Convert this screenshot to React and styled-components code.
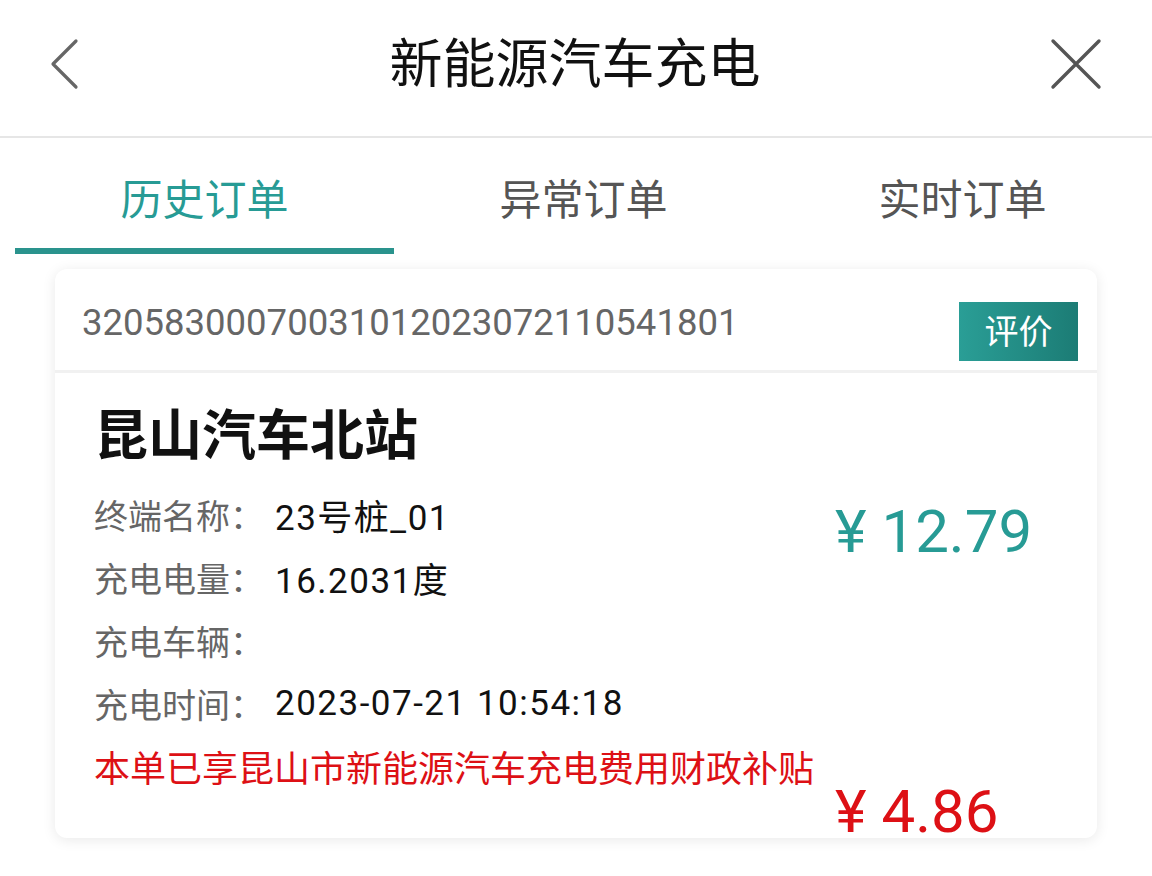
import React, { useState } from "react";
import styled, { createGlobalStyle } from "styled-components";

const GlobalStyle = createGlobalStyle`
    html, body {
        margin: 0;
        padding: 0;
        background: #ffffff;
        font-family: "Noto Sans CJK SC", "Noto Sans", sans-serif;
    }
`;

const TABS = ["历史订单", "异常订单", "实时订单"];

const DETAILS = [
    { label: "终端名称：", value: "23号桩_01" },
    { label: "充电电量：", value: "16.2031度" },
    { label: "充电车辆：", value: "" },
    { label: "充电时间：", value: "2023-07-21 10:54:18" },
];

const BackIcon = () => (
    <svg width="40" height="52" viewBox="0 0 40 52" fill="none">
        <path d="M28 3 L5 26 L28 49" stroke="#666" strokeWidth="3.2" strokeLinecap="round" strokeLinejoin="round" />
    </svg>
);

const CloseIcon = () => (
    <svg width="52" height="52" viewBox="0 0 52 52" fill="none">
        <path d="M3 3 L49 49 M49 3 L3 49" stroke="#555" strokeWidth="3.4" strokeLinecap="round" />
    </svg>
);

const App = () => {
    const [activeTab, setActiveTab] = useState(0);

    return (
        <>
            <GlobalStyle />
            <Page>
                <Navbar>
                    <NavButton>
                        <BackIcon />
                    </NavButton>
                    <NavTitle>新能源汽车充电</NavTitle>
                    <NavButton $right>
                        <CloseIcon />
                    </NavButton>
                </Navbar>

                <TabBar>
                    {TABS.map((tab, i) => (
                        <Tab key={tab} $active={activeTab === i} onClick={() => setActiveTab(i)}>
                            {tab}
                        </Tab>
                    ))}
                </TabBar>

                <OrderCard>
                    <OrderHeader>
                        <OrderNumber>32058300070031012023072110541801</OrderNumber>
                        <RateButton>评价</RateButton>
                    </OrderHeader>

                    <OrderBody>
                        <StationName>昆山汽车北站</StationName>
                        <DetailGrid>
                            <DetailList>
                                {DETAILS.map((item) => (
                                    <DetailRow key={item.label}>
                                        <DetailLabel>{item.label}</DetailLabel>
                                        <DetailValue>{item.value}</DetailValue>
                                    </DetailRow>
                                ))}
                            </DetailList>
                            <Amount $color="#279b95" $offset="21px">¥ 12.79</Amount>
                            <SubsidyNote>本单已享昆山市新能源汽车充电费用财政补贴</SubsidyNote>
                            <Amount $color="#dd1015" $offset="-14px">¥ 4.86</Amount>
                        </DetailGrid>
                    </OrderBody>
                </OrderCard>
            </Page>
        </>
    );
};

export default App;

const Page = styled.div`
    width: 1152px;
    min-height: 876px;
    background: #ffffff;
`;

const Navbar = styled.div`
    height: 136px;
    display: flex;
    align-items: center;
    justify-content: space-between;
    padding: 0 50px 0 48px;
    border-bottom: 2px solid #e6e6e6;
    box-sizing: content-box;
`;

const NavButton = styled.div`
    width: 56px;
    height: 56px;
    display: flex;
    align-items: center;
    justify-content: ${(props) => (props.$right ? "flex-end" : "flex-start")};
    margin-top: -8px;
`;

const NavTitle = styled.div`
    font-size: 53px;
    color: #111;
    margin-top: -16px;
`;

const TabBar = styled.div`
    display: grid;
    grid-template-columns: repeat(3, 1fr);
    padding-left: 15px;
    height: 116px;
`;

const Tab = styled.div`
    display: flex;
    align-items: center;
    justify-content: center;
    font-size: 42px;
    color: ${(props) => (props.$active ? "#279b95" : "#555")};
    border-bottom: 6px solid ${(props) => (props.$active ? "#2a938d" : "transparent")};
    padding-top: 6px;
    cursor: pointer;
`;

const OrderCard = styled.div`
    margin: 15px 55px 0;
    height: 569px;
    background: #fff;
    border-radius: 12px;
    box-shadow: 0 2px 14px rgba(0, 0, 0, 0.09);
`;

const OrderHeader = styled.div`
    height: 101px;
    display: flex;
    align-items: flex-start;
    justify-content: space-between;
    padding: 0 19px 0 27px;
    border-bottom: 3px solid #f1f1f1;
`;

const OrderNumber = styled.div`
    font-family: Roboto, "Noto Sans CJK SC", sans-serif;
    font-size: 36.5px;
    color: #666;
    line-height: 50px;
    margin-top: 29px;
`;

const RateButton = styled.div`
    width: 119px;
    height: 59px;
    margin-top: 33px;
    display: flex;
    align-items: center;
    justify-content: center;
    font-size: 34px;
    line-height: 1;
    padding-bottom: 4px;
    box-sizing: border-box;
    color: #fff;
    background: linear-gradient(90deg, #2a9e96, #1c7c75);
`;

const OrderBody = styled.div`
    padding: 24px 0 0 39px;
`;

const StationName = styled.div`
    font-size: 54px;
    font-weight: 700;
    color: #111;
    line-height: 70px;
    margin-bottom: 16px;
`;

const DetailGrid = styled.div`
    display: grid;
    grid-template-columns: 741px auto;
    align-items: start;
`;

const DetailList = styled.div`
    display: flex;
    flex-direction: column;
`;

const DetailRow = styled.div`
    display: flex;
    align-items: center;
    height: 63px;
`;

const DetailLabel = styled.div`
    font-size: 34px;
    color: #666;
    width: 181px;
`;

const DetailValue = styled.div`
    font-family: Roboto, "Noto Sans CJK SC", sans-serif;
    font-size: 35px;
    letter-spacing: 1.5px;
    color: #111;
`;

const Amount = styled.div`
    grid-column: 2;
    font-family: Roboto, "Noto Sans CJK SC", sans-serif;
    font-size: 60px;
    line-height: 56px;
    color: ${(props) => props.$color};
    margin-top: ${(props) => props.$offset};
    white-space: nowrap;
`;

const SubsidyNote = styled.div`
    grid-column: 1 / -1;
    font-size: 36px;
    color: #dd1015;
    line-height: 63px;
    white-space: nowrap;
`;
